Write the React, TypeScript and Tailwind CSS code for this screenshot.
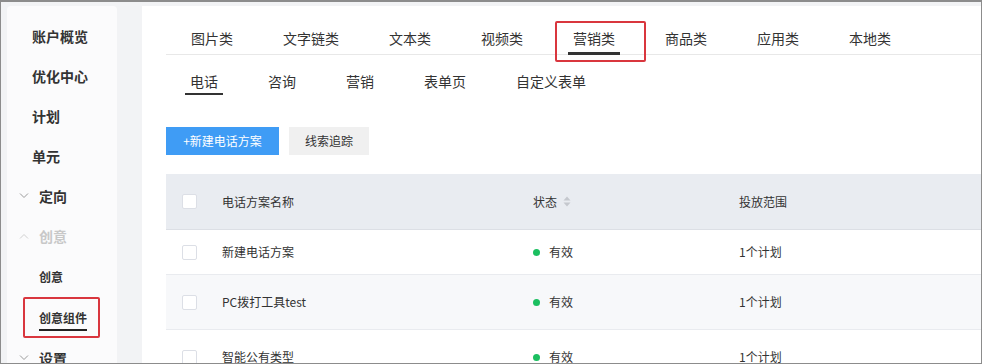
import { type ReactNode } from "react"

const font = { fontFamily: '"Microsoft YaHei", "Noto Sans CJK SC", "Noto Sans", sans-serif' }

const topTabs = ["图片类", "文字链类", "文本类", "视频类", "营销类", "商品类", "应用类", "本地类"]
const subTabs = ["电话", "咨询", "营销", "表单页", "自定义表单"]

const rows = [
  { name: "新建电话方案", status: "有效", scope: "1个计划", h: "h-[45px]", bg: "bg-white" },
  { name: "PC拨打工具test", status: "有效", scope: "1个计划", h: "h-[55px]", bg: "bg-[#f7f8fa]" },
  { name: "智能公有类型", status: "有效", scope: "1个计划", h: "h-[55px]", bg: "bg-white" },
]

function Chevron({ up }: { up?: boolean }) {
  return (
    <svg width="10" height="6" viewBox="0 0 10 6" className="shrink-0">
      <path
        d={up ? "M1 5.5 L5 1.5 L9 5.5" : "M1 0.5 L5 4.5 L9 0.5"}
        fill="none"
        stroke={up ? "#d0d0d0" : "#9a9a9a"}
        strokeWidth="1"
      />
    </svg>
  )
}

function Checkbox() {
  return <div className="w-[15px] h-[15px] bg-white border border-[#dcdfe6] rounded-[2px] shrink-0" />
}

function SideItem({ children, chevron, muted }: { children: ReactNode; chevron?: "up" | "down"; muted?: boolean }) {
  return (
    <div className="h-[40px] flex items-center">
      {chevron ? (
        <div className="flex items-center gap-[10px] pl-[12px]">
          <Chevron up={chevron === "up"} />
          <span className={`text-[14px] font-bold ${muted ? "text-[#c8c8c8]" : "text-[#333]"}`}>{children}</span>
        </div>
      ) : (
        <span className="pl-[25px] text-[14px] font-bold text-[#333]">{children}</span>
      )}
    </div>
  )
}

export default function App() {
  return (
    <div
      style={font}
      className="w-[982px] h-[364px] overflow-hidden bg-[#f2f3f5] border border-t-2 border-[#8c8c8c] flex pt-[4px] pl-[6px]"
    >
      {/* sidebar */}
      <aside className="w-[110px] shrink-0 bg-[#fbfbfc] rounded-t-[4px] pt-[10px]">
        <SideItem>账户概览</SideItem>
        <SideItem>优化中心</SideItem>
        <SideItem>计划</SideItem>
        <SideItem>单元</SideItem>
        <SideItem chevron="down">定向</SideItem>
        <SideItem chevron="up" muted>创意</SideItem>
        <div className="h-[41px] flex items-center pl-[32px]">
          <span className="text-[12px] font-bold text-[#333]">创意</span>
        </div>
        <div className="h-[41px] flex items-center pl-[16px]">
          <div className="relative h-[41px] w-[77px] flex items-center pl-[16px]">
            <span className="text-[12px] font-bold text-[#333] border-b-2 border-[#222] pb-[2px] mt-[4px]">创意组件</span>
            <div className="absolute inset-0 border-2 border-[#d9363e] rounded-[2px]" />
          </div>
        </div>
        <SideItem chevron="down">设置</SideItem>
      </aside>

      {/* main */}
      <main className="flex-1 ml-[25px] bg-white pt-[15px] px-[24px] pr-0 text-[#333]">
        <div className="flex gap-[40px] pl-[20px] border-b border-[#e8e8e8]">
          {topTabs.map((t) => (
            <div
              key={t}
              className={`relative h-[34px] px-[5px] flex items-center text-[14px] -mb-px ${
                t === "营销类" ? "border-b-[3px] border-[#333]" : ""
              }`}
            >
              <span className={t === "营销类" ? "pt-[3px]" : ""}>{t}</span>
              {t === "营销类" && (
                <div className="absolute -left-[13px] -right-[26px] top-0 bottom-[-10px] border-2 border-[#d9363e] rounded-[2px]" />
              )}
            </div>
          ))}
        </div>

        <div className="flex gap-[40px] pl-[19px] mt-[12px]">
          {subTabs.map((t, i) => (
            <div
              key={t}
              className={`h-[28px] px-[5px] flex items-center text-[14px] ${
                i === 0 ? "border-b-2 border-[#333] pt-[2px]" : ""
              }`}
            >
              {t}
            </div>
          ))}
        </div>

        <div className="flex gap-[10px] mt-[32px]">
          <button className="h-[28px] w-[113px] bg-[#3f9cf5] text-white text-[12px] flex items-center justify-center">
            +新建电话方案
          </button>
          <button className="h-[28px] w-[80px] bg-[#f0f0f0] text-[#333] text-[12px] flex items-center justify-center">
            线索追踪
          </button>
        </div>

        <div className="mt-[19px] text-[12px]">
          <div className="h-[56px] bg-[#e9ecf1] border-b border-[#dcdfe5] flex items-center">
            <div className="w-[56px] pl-[16px]">
              <Checkbox />
            </div>
            <div className="w-[311px] text-[#333]">电话方案名称</div>
            <div className="w-[206px] flex items-center gap-[6px] text-[#333]">
              状态
              <svg width="8" height="11" viewBox="0 0 8 11">
                <path d="M4 0.5 L7.5 4.5 L0.5 4.5 Z" fill="#c5c8ce" />
                <path d="M4 10.5 L7.5 6.5 L0.5 6.5 Z" fill="#c5c8ce" />
              </svg>
            </div>
            <div className="text-[#333]">投放范围</div>
          </div>
          {rows.map((r) => (
            <div key={r.name} className={`${r.h} ${r.bg} border-b border-[#e9ebef] flex items-center`}>
              <div className="w-[56px] pl-[16px]">
                <Checkbox />
              </div>
              <div className="w-[311px] text-[#333]">{r.name}</div>
              <div className="w-[206px] flex items-center gap-[9px] text-[#333]">
                <span className="w-[7px] h-[7px] rounded-full bg-[#1bbf60]" />
                {r.status}
              </div>
              <div className="text-[#333]">{r.scope}</div>
            </div>
          ))}
        </div>
      </main>
    </div>
  )
}
